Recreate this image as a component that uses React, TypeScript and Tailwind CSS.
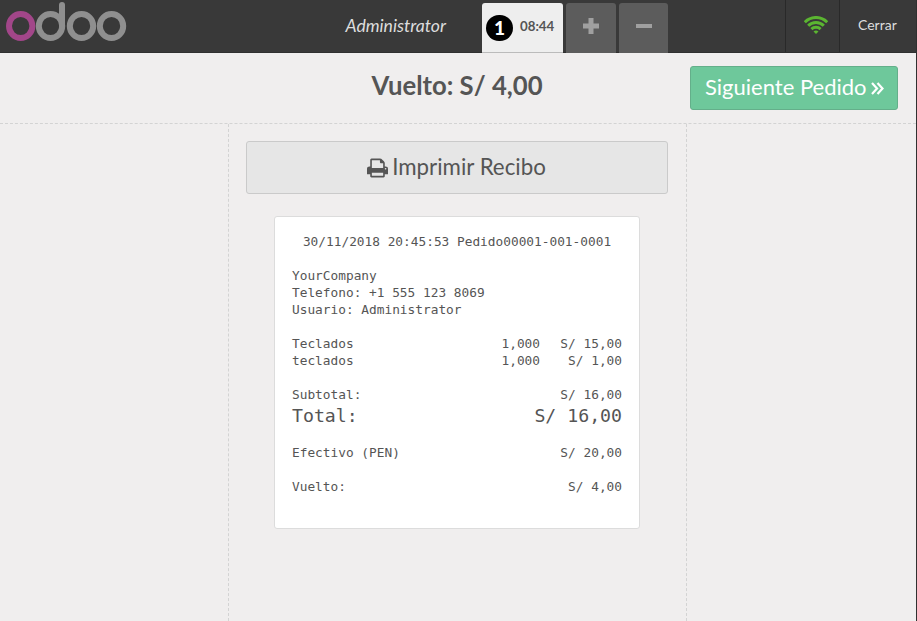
import React from "react";

function Logo() {
  return (
    <svg className="block h-[53px] w-[130px]" viewBox="0 0 130 53" fill="none" strokeWidth="6">
      <ellipse cx="20.7" cy="26" rx="11.7" ry="12" stroke="#a24689" />
      <g stroke="#8f8f8f">
        <ellipse cx="50.5" cy="26" rx="11.7" ry="12" />
        <path d="M62 26V5" strokeLinecap="round" />
        <ellipse cx="81.5" cy="26" rx="11.7" ry="12" />
        <ellipse cx="111.5" cy="26" rx="11.7" ry="12" />
      </g>
    </svg>
  );
}

function Wifi() {
  return (
    <svg className="mt-[16px] ml-[18px] block h-[18px] w-[24px]" viewBox="0 0 24 18" fill="none" stroke="#5bb531" strokeWidth="3">
      <path d="M0.8 6.2C7 -0.1 17 -0.1 23.2 6.2M4.2 9.8C8.6 5.4 15.4 5.4 19.8 9.8M7.4 13.2C10 10.7 14 10.7 16.6 13.2" />
      <path d="M9.5 15.6Q12 13.6 14.5 15.6L12 18Z" fill="#5bb531" stroke="none" />
    </svg>
  );
}

function Printer() {
  return (
    <svg className="mr-[4px] block h-[22px] w-[21px] shrink-0" viewBox="0 0 1664 1792" preserveAspectRatio="none" fill="#555">
      <path d="M384 1536h896v-256h-896v256zm0-640h896v-384h-160q-40 0-68-28t-28-68v-160h-640v640zm1152 64q0-26-19-45t-45-19-45 19-19 45 19 45 45 19 45-19 19-45zm128 0v416q0 13-9.5 22.5t-22.5 9.5h-224v160q0 40-28 68t-68 28h-960q-40 0-68-28t-28-68v-160h-224q-13 0-22.5-9.5t-9.5-22.5v-416q0-79 56.5-135.5t135.5-56.5h64v-544q0-40 28-68t68-28h672q40 0 88 20t76 48l152 152q28 28 48 76t20 88v256h64q79 0 135.5 56.5t56.5 135.5z" />
    </svg>
  );
}

function Row({ label, qty, value }: { label: string; qty?: string; value?: string }) {
  return (
    <div className="flex h-[17px] whitespace-pre">
      <span className="flex-1">{label}</span>
      {qty && <span>{qty}</span>}
      <span className="w-[82px] text-right">{value}</span>
    </div>
  );
}

export default function App() {
  return (
    <div className="flex h-[621px] w-[917px] overflow-hidden bg-[#303030] font-['Lato',sans-serif] text-[#555]">
      <div className="flex w-[916px] flex-col bg-[#f0eeee]">
        <header className="flex h-[53px] shrink-0 border-b border-[#303030] bg-[#393939]">
          <Logo />
          <div className="w-[352px] pr-[36px] text-right text-[17.6px] leading-[51px] text-[#ddd] italic">Administrator</div>
          <div className="mt-[3px] flex h-[50px] w-[81px] items-center rounded-t-[3px] border-b border-[#bbb] bg-[#eee] pl-[4px]">
            <span className="flex h-[26px] w-[27px] items-center justify-center rounded-full bg-black text-[19px] leading-none font-black text-white">1</span>
            <span className="ml-[7px] pb-[2px] text-[13.3px] font-bold">08:44</span>
          </div>
          <div className="mt-[3px] ml-[3px] flex h-[50px] w-[50px] justify-center rounded-t-[3px] bg-[#5c5c5c] pt-[15px]">
            <svg className="h-4 w-4" viewBox="0 0 16 16" fill="none" stroke="#a0a0a0" strokeWidth="5"><path d="M0 8H16M8 0V16" /></svg>
          </div>
          <div className="mt-[3px] ml-[3px] flex h-[50px] w-[49px] justify-center rounded-t-[3px] bg-[#5c5c5c] pt-[15px]">
            <svg className="h-4 w-4" viewBox="0 0 16 16" fill="none" stroke="#a0a0a0" strokeWidth="4"><path d="M0 8H16" /></svg>
          </div>
          <div className="ml-[117px] w-[54px] border-l border-[#292929]"><Wifi /></div>
          <div className="flex-1 border-l border-[#292929] pl-[18px] text-[14px] leading-[50px] text-[#ddd]">Cerrar</div>
        </header>
        <section className="flex h-[71px] shrink-0 border-b border-dashed border-[#d3d3d3]">
          <h1 className="ml-[228px] w-[458px] text-center text-[25.7px] leading-[65px] font-bold">Vuelto: S/ 4,00</h1>
          <button className="mt-[13px] ml-[4px] flex h-[44px] w-[208px] items-center rounded-[3px] border border-[#64af8a] bg-[#6ec89b] pb-[3px] pl-[14px] text-[22px] whitespace-nowrap text-white">
            Siguiente Pedido
            <svg className="mt-[3px] ml-[4px] h-[13px] w-[13px]" viewBox="0 0 13 13" fill="none" stroke="white" strokeWidth="2.2"><path d="M1 1L6 6.5L1 12M6.5 1L11.5 6.5L6.5 12" /></svg>
          </button>
        </section>
        <main className="ml-[228px] flex w-[459px] flex-1 flex-col items-center border-x border-dashed border-[#d3d3d3] pt-[17px]">
          <button className="mr-[2px] flex h-[53px] w-[422px] items-center justify-center rounded-[3px] border border-[#cacaca] bg-[#e6e6e6] text-[22.3px]">
            <Printer /><span className="pb-[2px]">Imprimir Recibo</span>
          </button>
          <div className="mt-[22px] mr-px h-[313px] w-[366px] rounded-[3px] border border-[#dcdcdc] bg-white px-[17px] pt-[16px] font-['DejaVu_Sans_Mono',monospace] text-[12.8px] leading-[17px]">
            <div className="text-center whitespace-nowrap">30/11/2018 20:45:53 Pedido00001-001-0001</div>
            <Row label="" />
            <Row label="YourCompany" />
            <Row label="Telefono: +1 555 123 8069" />
            <Row label="Usuario: Administrator" />
            <Row label="" />
            <Row label="Teclados" qty="1,000" value="S/ 15,00" />
            <Row label="teclados" qty="1,000" value="S/ 1,00" />
            <Row label="" />
            <Row label="Subtotal:" value="S/ 16,00" />
            <div className="flex h-6 justify-between text-[18.2px] leading-[26px]"><span>Total:</span><span>S/ 16,00</span></div>
            <Row label="" />
            <Row label="Efectivo (PEN)" value="S/ 20,00" />
            <Row label="" />
            <Row label="Vuelto:" value="S/ 4,00" />
          </div>
        </main>
      </div>
    </div>
  );
}
